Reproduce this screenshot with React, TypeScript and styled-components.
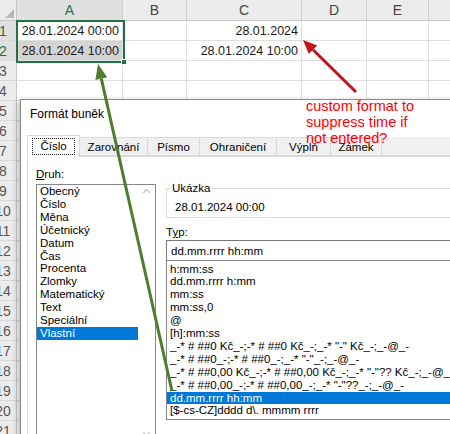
import React from 'react';
import styled, { createGlobalStyle } from 'styled-components';

const GlobalStyle = createGlobalStyle`
  *, *::before, *::after { box-sizing: border-box; }
  html, body { margin: 0; padding: 0; background: #fff; }
  body { font-family: "Liberation Sans", Arial, sans-serif; }
`;

const Screen = styled.div`
  position: relative;
  width: 450px;
  height: 434px;
  overflow: hidden;
  background: #fff;
`;

/* ---------- spreadsheet ---------- */

const Sheet = styled.div`
  display: grid;
  grid-template-columns: 17px 106px 64px 115px 65px 62px 60px;
  grid-template-rows: 21px;
  grid-auto-rows: 20px;
`;

const Corner = styled.div`
  position: relative;
  background: #ececec;
  border-right: 1px solid #c8c8c8;
  border-bottom: 1px solid #c8c8c8;

  &::after {
    content: '';
    position: absolute;
    right: 2px;
    bottom: 2px;
    border-style: solid;
    border-width: 0 0 9px 9px;
    border-color: transparent transparent #b8b8b8 transparent;
  }
`;

const ColHead = styled.div<{ $active?: boolean }>`
  display: flex;
  align-items: center;
  justify-content: center;
  background: ${(p) => (p.$active ? '#e0e0e0' : '#ececec')};
  color: ${(p) => (p.$active ? '#217346' : '#444')};
  border-right: 1px solid #d0d0d0;
  border-bottom: 1px solid #c8c8c8;
  font-size: 14px;
`;

const RowHead = styled.div<{ $active?: boolean }>`
  display: flex;
  align-items: center;
  overflow: hidden;
  background: ${(p) => (p.$active ? '#e0e0e0' : '#ececec')};
  color: ${(p) => (p.$active ? '#217346' : '#555')};
  border-right: 1px solid #c8c8c8;
  border-bottom: 1px solid #d8d8d8;
  font-size: 14px;
`;

const RowNum = styled.span`
  flex: 0 0 26px;
  margin-left: -10px;
  text-align: center;
`;

const Cell = styled.div<{ $shade?: boolean }>`
  display: flex;
  align-items: center;
  justify-content: flex-end;
  padding: 1px 3px 0 0;
  background: ${(p) => (p.$shade ? '#d4d4d4' : '#fff')};
  border-right: 1px solid #dedede;
  border-bottom: 1px solid #dedede;
  font-size: 12.5px;
  color: #1a1a1a;
  white-space: nowrap;
`;

const Selection = styled.div`
  position: absolute;
  left: 16px;
  top: 20px;
  width: 109px;
  height: 43px;
  border: 2px solid #217346;
  pointer-events: none;

  &::after {
    content: '';
    position: absolute;
    right: -4px;
    bottom: -4px;
    width: 6px;
    height: 6px;
    background: #217346;
    border: 1px solid #fff;
  }
`;

/* ---------- dialog ---------- */

const Dialog = styled.div`
  position: absolute;
  left: 20px;
  top: 99px;
  width: 445px;
  height: 350px;
  display: flex;
  flex-direction: column;
  background: #fff;
  border: 1px solid #8c8c8c;
  box-shadow: -2px 2px 6px rgba(0, 0, 0, 0.3);
  color: #000;
  font-size: 11.5px;
`;

const TitleBar = styled.div`
  flex: 0 0 28px;
  display: flex;
  align-items: center;
  padding-left: 9px;
  font-size: 12px;
`;

const Body = styled.div`
  flex: 1;
  display: flex;
  flex-direction: column;
  padding: 7px 0 0 6px;
`;

const TabStrip = styled.div`
  display: flex;
  align-items: flex-end;
  height: 21px;
`;

const Tab = styled.div<{ $w: number; $selected?: boolean }>`
  position: relative;
  flex: 0 0 ${(p) => p.$w}px;
  height: ${(p) => (p.$selected ? 22 : 19)}px;
  display: flex;
  align-items: center;
  justify-content: center;
  background: ${(p) => (p.$selected ? '#fff' : '#f0f0f0')};
  border: 1px solid #d9d9d9;
  border-left-width: ${(p) => (p.$selected ? 1 : 0)}px;
  border-bottom: ${(p) => (p.$selected ? 'none' : '1px solid #d9d9d9')};
  margin-bottom: ${(p) => (p.$selected ? -1 : 0)}px;
  padding-top: ${(p) => (p.$selected ? 0 : 1)}px;
`;

const TabFill = styled.div`
  flex: 1;
  height: 19px;
  background: #f0f0f0;
  border-bottom: 1px solid #d9d9d9;
`;

const FocusRing = styled.span`
  padding: 1px 7px 2px 7px;
  border: 1px dotted #222;
`;

const TabPanel = styled.div`
  flex: 1;
  display: flex;
  gap: 10px;
  padding: 10px 0 0 8px;
  background: #fff;
  border-top: 1px solid #d9d9d9;
  border-left: 1px solid #d9d9d9;
`;

const Column = styled.div<{ $w: number }>`
  flex: 0 0 ${(p) => p.$w}px;
  display: flex;
  flex-direction: column;
`;

const Label = styled.div<{ $gap?: number }>`
  line-height: 14px;
  margin-top: ${(p) => p.$gap ?? 0}px;
`;

const ListBox = styled.div`
  margin-top: 3px;
  height: 256px;
  display: flex;
  border: 1px solid #828790;
`;

const Items = styled.div<{ $pad?: number }>`
  flex: 1;
  padding-top: ${(p) => p.$pad ?? 0}px;
  overflow: hidden;
`;

const Item = styled.div<{ $selected?: boolean }>`
  line-height: 12.9px;
  padding-left: 3px;
  white-space: pre;
  background: ${(p) => (p.$selected ? '#0078d7' : 'transparent')};
  color: ${(p) => (p.$selected ? '#fff' : '#000')};
`;

const ScrollTrack = styled.div`
  flex: 0 0 17px;
  display: flex;
  flex-direction: column;
  justify-content: space-between;
  align-items: center;
  padding: 3px 0 2px;
  color: #c2c2c2;
`;

const GroupBox = styled.fieldset`
  margin: 14px 0 0;
  padding: 0;
  border: 1px solid #dcdcdc;
  min-width: 0;
`;

const Legend = styled.legend`
  margin-left: 3px;
  padding: 0 2px;
  line-height: 14px;
`;

const Sample = styled.div`
  line-height: 14px;
  padding: 5px 0 3px 8px;
`;

const TypeInput = styled.div`
  margin-top: 1px;
  height: 21px;
  display: flex;
  align-items: center;
  padding-left: 4px;
  border: 1px solid #7a7a7a;
`;

const TypeList = styled.div`
  margin-top: -1px;
  height: 160px;
  display: flex;
  border: 1px solid #828790;
`;

/* ---------- annotations ---------- */

const Note = styled.div`
  position: absolute;
  z-index: 2;
  left: 306px;
  top: 98px;
  color: #ff0000;
  font-size: 14.5px;
  line-height: 16px;
  pointer-events: none;
`;

const Overlay = styled.svg`
  position: absolute;
  z-index: 2;
  left: 0;
  top: 0;
  pointer-events: none;
`;

const columns = ['A', 'B', 'C', 'D', 'E', 'F'];

const cellText = (row: number, col: number) => {
  if (row === 1 && col === 0) return '28.01.2024 00:00';
  if (row === 2 && col === 0) return '28.01.2024 10:00';
  if (row === 1 && col === 2) return '28.01.2024';
  if (row === 2 && col === 2) return '28.01.2024 10:00';
  return '';
};

const categories = [
  'Obecný', 'Číslo', 'Měna', 'Účetnický', 'Datum', 'Čas', 'Procenta',
  'Zlomky', 'Matematický', 'Text', 'Speciální', 'Vlastní',
];

const formats = [
  'h:mm:ss',
  'dd.mm.rrrr h:mm',
  'mm:ss',
  'mm:ss,0',
  '@',
  '[h]:mm:ss',
  '_-* # ##0 Kč_-;-* # ##0 Kč_-;_-* "-" Kč_-;_-@_-',
  '_-* # ##0_-;-* # ##0_-;_-* "-"_-;_-@_-',
  '_-* # ##0,00 Kč_-;-* # ##0,00 Kč_-;_-* "-"?? Kč_-;_-@_-',
  '_-* # ##0,00_-;-* # ##0,00_-;_-* "-"??_-;_-@_-',
  'dd.mm.rrrr hh:mm',
  '[$-cs-CZ]dddd d\\. mmmm rrrr',
];

const tabs = [
  { label: 'Číslo', w: 53 },
  { label: 'Zarovnání', w: 68 },
  { label: 'Písmo', w: 52 },
  { label: 'Ohraničení', w: 77 },
  { label: 'Výplň', w: 54 },
  { label: 'Zámek', w: 51 },
];

const Chevron = ({ up }: { up?: boolean }) => (
  <svg width="9" height="6" viewBox="0 0 9 6">
    <path
      d={up ? 'M1 5 L4.5 1.5 L8 5' : 'M1 1 L4.5 4.5 L8 1'}
      fill="none"
      stroke="currentColor"
      strokeWidth="1.2"
    />
  </svg>
);

const App: React.FC = () => {
  const rows = Array.from({ length: 21 }, (_, i) => i + 1);

  return (
    <Screen>
      <GlobalStyle />
      <Sheet>
        <Corner />
        {columns.map((c) => (
          <ColHead key={c} $active={c === 'A'}>{c}</ColHead>
        ))}
        {rows.map((r) => (
          <React.Fragment key={r}>
            <RowHead $active={r <= 2}>
              <RowNum>{r}</RowNum>
            </RowHead>
            {columns.map((c, ci) => (
              <Cell key={c} $shade={r === 2 && ci === 0}>
                {cellText(r, ci)}
              </Cell>
            ))}
          </React.Fragment>
        ))}
      </Sheet>
      <Selection />

      <Dialog>
        <TitleBar>Formát buněk</TitleBar>
        <Body>
          <TabStrip>
            {tabs.map((t, i) => (
              <Tab key={t.label} $w={t.w} $selected={i === 0}>
                {i === 0 ? <FocusRing>{t.label}</FocusRing> : t.label}
              </Tab>
            ))}
            <TabFill />
          </TabStrip>
          <TabPanel>
            <Column $w={120}>
              <Label><u>D</u>ruh:</Label>
              <ListBox>
                <Items>
                  {categories.map((c) => (
                    <Item key={c} $selected={c === 'Vlastní'}>{c}</Item>
                  ))}
                </Items>
                <ScrollTrack>
                  <Chevron up />
                  <Chevron />
                </ScrollTrack>
              </ListBox>
            </Column>
            <Column $w={300}>
              <GroupBox>
                <Legend>Ukázka</Legend>
                <Sample>28.01.2024 00:00</Sample>
              </GroupBox>
              <Label $gap={7}>T<u>y</u>p:</Label>
              <TypeInput>dd.mm.rrrr hh:mm</TypeInput>
              <TypeList>
                <Items $pad={1.5}>
                  {formats.map((f, i) => (
                    <Item key={f} $selected={i === 10}>{f}</Item>
                  ))}
                </Items>
              </TypeList>
            </Column>
          </TabPanel>
        </Body>
      </Dialog>

      <Note>
        custom format to
        <br />
        suppress time if
        <br />
        not entered?
      </Note>

      <Overlay width="450" height="434" viewBox="0 0 450 434">
        <line x1="356" y1="92" x2="313" y2="49.8" stroke="#c0141c" strokeWidth="3" />
        <polygon points="303,40 317.2,45.5 308.8,54.1" fill="#c0141c" />
        <line x1="172" y1="391" x2="101.3" y2="78.6" stroke="#4e7d2b" strokeWidth="3" />
        <polygon points="98,64 107.2,77.3 95.4,79.9" fill="#4e7d2b" />
      </Overlay>
    </Screen>
  );
};

export default App;
